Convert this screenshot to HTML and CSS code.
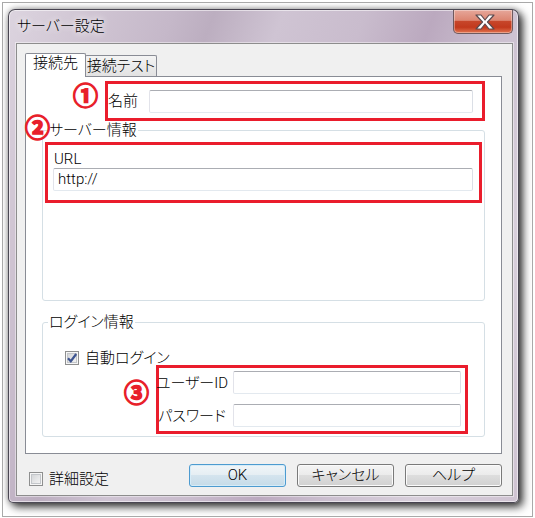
FILE: index.html
```html
<!DOCTYPE html>
<html lang="ja">
<head>
<meta charset="utf-8">
<title>サーバー設定</title>
<link rel="stylesheet" href="styles.css">
</head>
<body>
<div class="screen">
  <div class="window">
    <div class="titlebar">
      <span class="title">サーバー設定</span>
      <span class="close">
        <svg width="20" height="16" viewBox="0 0 20 16"><path d="M1 1h5l4 5 4-5h5l-6.5 7 6.5 7h-5l-4-5-4 5H1l6.5-7z" fill="#fff" stroke="#5a4a4e" stroke-width="1.2" stroke-linejoin="round"/></svg>
      </span>
    </div>
    <div class="client">
      <div class="tabs">
        <div class="tab active">接続先</div>
        <div class="tab">接続テスト</div>
      </div>
      <div class="panel">
        <div class="anno anno-name">
          <span class="num num-1">①</span>
          <span class="name-lbl">名前</span>
          <span class="field name-field"></span>
        </div>
        <div class="group group-server">
          <div class="group-title">サーバー情報</div>
          <div class="anno anno-url">
            <span class="num num-2">②</span>
            <div class="url-lbl">URL</div>
            <div class="field url-field">http://</div>
          </div>
        </div>
        <div class="group group-login">
          <div class="group-title">ログイン情報</div>
          <div class="check-row">
            <span class="cb"><svg width="12" height="12" viewBox="0 0 12 12"><path d="M2 6.2 L4.8 9.2 L10.2 2" fill="none" stroke="#3e5591" stroke-width="2.2"/></svg></span>
            <span>自動ログイン</span>
          </div>
          <div class="anno anno-login">
            <span class="num num-3">③</span>
            <span class="lbl">ユーザーID</span>
            <span class="field"></span>
            <span class="lbl">パスワード</span>
            <span class="field"></span>
          </div>
        </div>
      </div>
      <div class="footer">
        <div class="check-wrap">
          <span class="cb"></span>
          <span>詳細設定</span>
        </div>
        <button class="btn default">OK</button>
        <button class="btn">キャンセル</button>
        <button class="btn">ヘルプ</button>
      </div>
    </div>
  </div>
</div>
</body>
</html>
```

FILE: styles.css
```css
body {
  margin: 0;
  background: #fff;
  font-family: "Roboto", "Noto Sans CJK JP", sans-serif;
  font-size: 15px;
  font-weight: 300;
  color: #000;
  font-feature-settings: "palt";
}

.screen {
  margin: 2px 0 0 2px;
  width: 531px;
  height: 515px;
  box-sizing: border-box;
  border: 1px solid #a9a9a9;
  padding: 6px 0 0 5px;
  overflow: hidden;
}

.window {
  width: 511px;
  height: 494px;
  box-sizing: border-box;
  border: 1px solid rgba(30, 30, 40, 0.75);
  border-radius: 7px 7px 5px 5px;
  padding: 0 5px 6px 7px;
  background: linear-gradient(110deg, #dcd4df 0%, #d0c5d3 12%, #c5b8c9 24%, #bcaec0 30%, #cfc4d3 40%, #c9bccd 52%, #bba9bf 62%, #cbbfcf 72%, #d8cfdb 85%, #cfc3d2 100%);
  box-shadow: 4px 4px 9px rgba(0, 0, 0, 0.75), 0 0 6px rgba(0, 0, 0, 0.35), inset 0 0 0 1px rgba(255, 255, 255, 0.55);
  display: flex;
  flex-direction: column;
}

.titlebar {
  height: 33px;
  flex: none;
  display: flex;
  align-items: flex-start;
}

.title {
  margin: 6px 0 0 1px;
  line-height: 20px;
  font-size: 15px;
  font-weight: 300;
  text-shadow: 0 0 6px #fff, 0 0 10px rgba(255, 255, 255, 0.8);
}

.close {
  margin-left: auto;
  width: 60px;
  height: 24px;
  box-sizing: border-box;
  border: 1px solid #6e5a5e;
  border-top: none;
  border-radius: 0 0 5px 5px;
  background: linear-gradient(#e6a79a 0%, #dc8571 45%, #c7462a 50%, #c2391d 75%, #e2744f 100%);
  box-shadow: inset 0 0 0 1px rgba(255, 255, 255, 0.35);
  display: flex;
  align-items: center;
  justify-content: center;
  padding-left: 4px;
}

.client {
  height: 453px;
  flex: none;
  box-sizing: border-box;
  border: 1px solid #8d8d8d;
  background: #f0f0f0;
  display: flex;
  flex-direction: column;
  box-shadow: 0 0 0 1px rgba(255, 255, 255, 0.45);
}

.tabs {
  display: flex;
  align-items: flex-end;
  height: 23px;
  margin: 9px 0 0 8px;
}

.tab {
  box-sizing: border-box;
  border: 1px solid #898c95;
  border-bottom: none;
  height: 21px;
  width: 72px;
  margin-left: -1px;
  text-align: center;
  line-height: 18px;
  padding-top: 1px;
  background: linear-gradient(#f4f4f4, #e2e2e2);
  border-radius: 2px 2px 0 0;
  white-space: nowrap;
}

.tab.active {
  height: 24px;
  width: 61px;
  margin: 0 0 -1px 0;
  padding-top: 0;
  background: #fff;
  position: relative;
  z-index: 1;
}

.panel {
  box-sizing: border-box;
  width: 477px;
  height: 378px;
  margin-left: 8px;
  border: 1px solid #898c95;
  background: #fff;
  padding: 4px 16px 0;
}

.anno {
  position: relative;
  box-sizing: border-box;
  border: 3px solid #ea1d2c;
}

.num {
  position: absolute;
  font-family: "Noto Sans CJK JP", sans-serif;
  font-size: 25px;
  line-height: 25px;
  font-weight: 700;
  color: #e8202a;
  -webkit-text-stroke: 1.5px #e8202a;
  text-shadow: 0 0 2px #fff, 0 0 2px #fff;
  font-feature-settings: normal;
}

.num-1 { left: -35px; top: -2px; }
.num-2 { left: -23px; top: -31px; }
.num-3 { left: -35px; top: 11px; }

.anno-name {
  margin-left: 63px;
  width: 380px;
  height: 40px;
  display: flex;
  align-items: center;
}

.name-lbl {
  width: 41px;
  line-height: 18px;
}

.field {
  display: block;
  box-sizing: border-box;
  height: 23px;
  border: 1px solid;
  border-color: #abadb3 #dbdfe6 #e3e9ef #e2e3ea;
  border-radius: 2px;
  background: #fff;
}

.name-field { width: 324px; }

.group {
  box-sizing: border-box;
  border: 1px solid #d5dfe5;
  border-radius: 3px;
}

.group-server {
  height: 171px;
  margin-top: 9px;
}

.group-login {
  height: 115px;
  margin-top: 21px;
}

.group-title {
  width: fit-content;
  margin: -10px 0 0 5px;
  padding: 0 1px;
  background: #fff;
  line-height: 18px;
}

.anno-url {
  margin: 3px 2px 0;
  height: 61px;
}

.url-lbl {
  margin: 5px 0 0 6px;
  line-height: 18px;
}

.url-field {
  width: 420px;
  margin-left: 5px;
  line-height: 21px;
  padding-left: 4px;
}

.check-row {
  display: flex;
  align-items: center;
  gap: 6px;
  height: 16px;
  line-height: 16px;
  margin: 19px 0 0 22px;
  white-space: nowrap;
}

.cb {
  flex: none;
  width: 14px;
  height: 14px;
  box-sizing: border-box;
  border: 1px solid #8e8f8f;
  background: linear-gradient(135deg, #cdcfd2 0%, #e6e7e8 55%, #f8f8f8 100%);
  box-shadow: inset 0 0 0 1px #f6f6f6, inset 0 0 0 2px #c3c6ca;
  display: flex;
  align-items: center;
  justify-content: center;
}

.anno-login {
  margin: -1px 0 0 113px;
  width: 312px;
  height: 69px;
  display: grid;
  grid-template-columns: 66px 228px;
  column-gap: 8px;
  row-gap: 10px;
  padding-top: 3px;
  align-items: center;
  align-content: start;
}

.anno-login .lbl {
  justify-self: center;
  white-space: nowrap;
  line-height: 18px;
}

.footer {
  display: flex;
  align-items: center;
  height: 23px;
  margin-top: 10px;
  padding: 0 10px 0 12px;
}

.check-wrap {
  display: flex;
  align-items: center;
  gap: 6px;
  height: 16px;
  line-height: 16px;
  margin-top: 7px;
  white-space: nowrap;
}

.btn {
  box-sizing: border-box;
  width: 97px;
  height: 23px;
  margin-left: 11px;
  padding: 0;
  border: 1px solid #7a7a7a;
  border-radius: 3px;
  background: linear-gradient(#f4f4f4 0%, #ebebeb 49%, #dddddd 50%, #d1d1d1 100%);
  box-shadow: inset 0 0 0 1px #fbfbfb;
  font-family: "Roboto", "Noto Sans CJK JP", sans-serif;
  font-weight: 300;
  font-feature-settings: "palt";
  font-size: 15px;
  line-height: 19px;
  color: #000;
}

.btn.default {
  margin-left: auto;
  border-color: #4d9bd0;
  background: linear-gradient(#f0f5f8 0%, #e5eef3 49%, #d4e4ee 50%, #c6dbe8 100%);
  box-shadow: inset 0 0 0 1px #d6ecf8;
}
```
